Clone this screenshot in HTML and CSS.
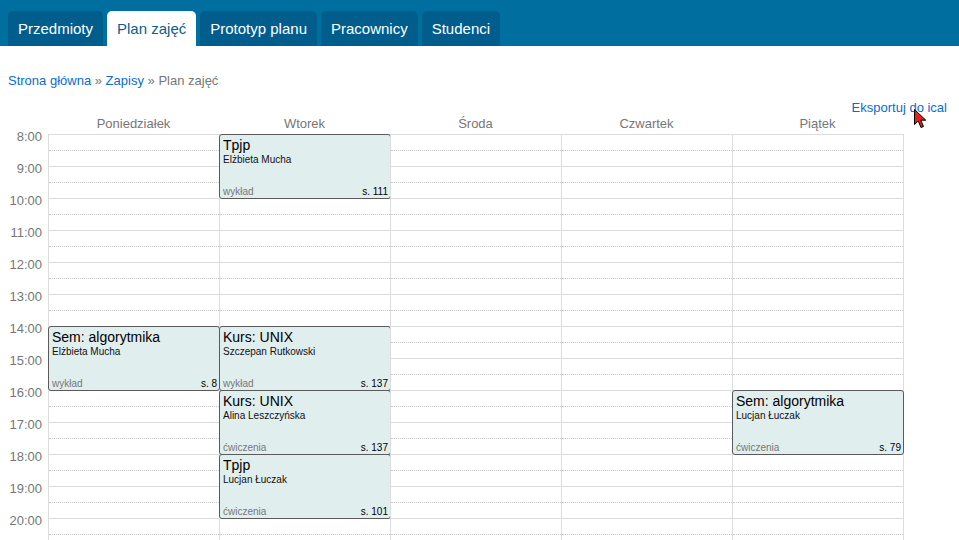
FILE: index.html
```html
<!DOCTYPE html>
<html lang="pl">
<head>
<meta charset="utf-8">
<title>Plan zajęć</title>
<link rel="stylesheet" href="styles.css">
</head>
<body>
<header class="topbar">
  <nav class="tabs">
    <a class="tab" href="#">Przedmioty</a>
    <a class="tab active" href="#">Plan zajęć</a>
    <a class="tab" href="#">Prototyp planu</a>
    <a class="tab" href="#">Pracownicy</a>
    <a class="tab" href="#">Studenci</a>
  </nav>
</header>
<main class="content">
  <div class="breadcrumb">
    <a href="#">Strona główna</a> <span class="sep">»</span> <a href="#">Zapisy</a> <span class="sep">»</span> <span class="current">Plan zajęć</span>
  </div>
  <div class="export"><a href="#">Eksportuj do ical</a></div>
  <div class="schedule">
    <div class="head-row">
      <div class="head-spacer"></div>
      <div class="day-name">Poniedziałek</div>
      <div class="day-name">Wtorek</div>
      <div class="day-name">Środa</div>
      <div class="day-name">Czwartek</div>
      <div class="day-name">Piątek</div>
    </div>
    <div class="body-row">
      <div class="times">
        <div class="time">8:00</div>
        <div class="time">9:00</div>
        <div class="time">10:00</div>
        <div class="time">11:00</div>
        <div class="time">12:00</div>
        <div class="time">13:00</div>
        <div class="time">14:00</div>
        <div class="time">15:00</div>
        <div class="time">16:00</div>
        <div class="time">17:00</div>
        <div class="time">18:00</div>
        <div class="time">19:00</div>
        <div class="time">20:00</div>
      </div>
      <div class="day">
        <div class="hour"></div><div class="hour"></div><div class="hour"></div><div class="hour"></div><div class="hour"></div><div class="hour"></div><div class="hour"></div><div class="hour"></div><div class="hour"></div><div class="hour"></div><div class="hour"></div><div class="hour"></div><div class="hour"></div>
        <div class="event" style="top:192px">
          <div class="ev-title">Sem: algorytmika</div>
          <div class="ev-person">Elżbieta Mucha</div>
          <div class="ev-foot"><span class="ev-type">wykład</span><span class="ev-room">s. 8</span></div>
        </div>
      </div>
      <div class="day">
        <div class="hour"></div><div class="hour"></div><div class="hour"></div><div class="hour"></div><div class="hour"></div><div class="hour"></div><div class="hour"></div><div class="hour"></div><div class="hour"></div><div class="hour"></div><div class="hour"></div><div class="hour"></div><div class="hour"></div>
        <div class="event" style="top:0px">
          <div class="ev-title">Tpjp</div>
          <div class="ev-person">Elżbieta Mucha</div>
          <div class="ev-foot"><span class="ev-type">wykład</span><span class="ev-room">s. 111</span></div>
        </div>
        <div class="event" style="top:192px">
          <div class="ev-title">Kurs: UNIX</div>
          <div class="ev-person">Szczepan Rutkowski</div>
          <div class="ev-foot"><span class="ev-type">wykład</span><span class="ev-room">s. 137</span></div>
        </div>
        <div class="event" style="top:256px">
          <div class="ev-title">Kurs: UNIX</div>
          <div class="ev-person">Alina Leszczyńska</div>
          <div class="ev-foot"><span class="ev-type">ćwiczenia</span><span class="ev-room">s. 137</span></div>
        </div>
        <div class="event" style="top:320px">
          <div class="ev-title">Tpjp</div>
          <div class="ev-person">Lucjan Łuczak</div>
          <div class="ev-foot"><span class="ev-type">ćwiczenia</span><span class="ev-room">s. 101</span></div>
        </div>
      </div>
      <div class="day">
        <div class="hour"></div><div class="hour"></div><div class="hour"></div><div class="hour"></div><div class="hour"></div><div class="hour"></div><div class="hour"></div><div class="hour"></div><div class="hour"></div><div class="hour"></div><div class="hour"></div><div class="hour"></div><div class="hour"></div>
      </div>
      <div class="day">
        <div class="hour"></div><div class="hour"></div><div class="hour"></div><div class="hour"></div><div class="hour"></div><div class="hour"></div><div class="hour"></div><div class="hour"></div><div class="hour"></div><div class="hour"></div><div class="hour"></div><div class="hour"></div><div class="hour"></div>
      </div>
      <div class="day last">
        <div class="hour"></div><div class="hour"></div><div class="hour"></div><div class="hour"></div><div class="hour"></div><div class="hour"></div><div class="hour"></div><div class="hour"></div><div class="hour"></div><div class="hour"></div><div class="hour"></div><div class="hour"></div><div class="hour"></div>
        <div class="event" style="top:256px">
          <div class="ev-title">Sem: algorytmika</div>
          <div class="ev-person">Lucjan Łuczak</div>
          <div class="ev-foot"><span class="ev-type">ćwiczenia</span><span class="ev-room">s. 79</span></div>
        </div>
      </div>
    </div>
  </div>
</main>
<svg class="cursor" width="14" height="20" viewBox="0 0 14 20" aria-hidden="true">
  <path d="M0.5 0.5 L0.5 15.5 L4.2 12 L7 18.5 L9.5 17.5 L6.8 11.2 L11.8 11.2 Z" fill="#e3201b" stroke="#000" stroke-width="1" stroke-linejoin="round"/>
</svg>
</body>
</html>
```

FILE: styles.css
```css
html, body {
  margin: 0;
  padding: 0;
  overflow: hidden;
  background: #fff;
}

body {
  font-family: "Liberation Sans", Arial, sans-serif;
  color: #000;
}

a {
  text-decoration: none;
}

.topbar {
  height: 46px;
  background: #006fa0;
  display: flex;
  align-items: flex-end;
  padding-left: 8px;
}

.tabs {
  display: flex;
  gap: 4px;
}

.tab {
  display: block;
  height: 35px;
  box-sizing: border-box;
  padding: 1px 10px 0;
  line-height: 34px;
  font-size: 15px;
  color: #fff;
  background: #005d8c;
  border-radius: 5px 5px 0 0;
}

.tab.active {
  background: #fff;
  color: #0a5e92;
}

.content {
  padding: 0 12px 0 0;
}

.breadcrumb {
  margin-top: 27px;
  padding-left: 8px;
  font-size: 13px;
  line-height: 16px;
  height: 16px;
  color: #777;
}

.breadcrumb a {
  color: #0b6bcf;
}

.export {
  margin-top: 11px;
  height: 13px;
  font-size: 13px;
  line-height: 16px;
  text-align: right;
}

.export a {
  color: #0b6bcf;
}

.head-row {
  display: flex;
  height: 21px;
  box-sizing: border-box;
  padding-top: 1px;
  line-height: 20px;
  font-size: 13px;
  color: #777;
}

.head-spacer {
  width: 48px;
  flex: none;
}

.day-name {
  width: 171px;
  flex: none;
  text-align: center;
}

.body-row {
  display: flex;
  align-items: flex-start;
}

.times {
  width: 48px;
  flex: none;
  margin-top: -5px;
}

.time {
  height: 32px;
  line-height: 16px;
  font-size: 13px;
  color: #777;
  text-align: right;
  padding-right: 6px;
  box-sizing: border-box;
}

.day {
  position: relative;
  width: 171px;
  flex: none;
  box-sizing: border-box;
  border-left: 1px solid #ddd;
}

.day.last {
  width: 172px;
  border-right: 1px solid #ddd;
}

.hour {
  height: 32px;
  box-sizing: border-box;
  border-top: 1px solid #ddd;
}

.hour::after {
  content: "";
  display: block;
  margin-top: 15px;
  border-top: 1px dotted #c8c8c8;
}

.event {
  position: absolute;
  left: -1px;
  width: 172px;
  height: 65px;
  box-sizing: border-box;
  border: 1px solid #5a5a5a;
  border-radius: 3px;
  background: #e1eeee;
  display: flex;
  flex-direction: column;
  padding: 0 2px 0 3px;
}

.ev-title {
  padding-top: 2px;
  font-size: 14px;
  line-height: 16px;
  color: #000;
}

.ev-person {
  margin-top: 1px;
  font-size: 10px;
  line-height: 12px;
  color: #111;
}

.ev-foot {
  margin-top: auto;
  display: flex;
  justify-content: space-between;
  font-size: 10px;
  line-height: 12px;
}

.ev-type {
  color: #777;
}

.ev-room {
  color: #000;
}

.cursor {
  position: absolute;
  left: 914px;
  top: 109px;
}
```
